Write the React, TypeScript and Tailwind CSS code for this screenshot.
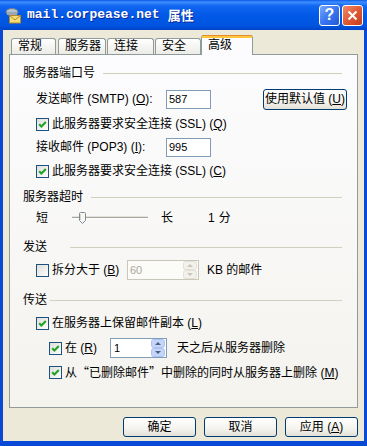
import React from "react";

function Check({ checked = true }: { checked?: boolean }) {
  return (
    <svg width="13" height="13" viewBox="0 0 13 13" className="shrink-0 block">
      <defs>
        <linearGradient id="cbg" x1="0" y1="0" x2="1" y2="1">
          <stop offset="0" stopColor="#DCDCD7" />
          <stop offset="1" stopColor="#FFFFFF" />
        </linearGradient>
      </defs>
      <rect x="0.5" y="0.5" width="12" height="12" fill="url(#cbg)" stroke="#1C5180" />
      {checked && (
        <path d="M3.2 6.2 L5.4 8.5 L9.8 4" fill="none" stroke="#21A121" strokeWidth="2" />
      )}
    </svg>
  );
}

function SpinArrows({ disabled = false }: { disabled?: boolean }) {
  const fill = disabled ? "#F2F1EB" : "#C5D5FA";
  const stroke = disabled ? "#E2E0D6" : "#AFC3F2";
  const arrow = disabled ? "#C9C7BA" : "#4D6185";
  return (
    <svg width="14" height="18" viewBox="0 0 14 18" className="block shrink-0">
      <rect x="0.5" y="0.5" width="13" height="8" rx="2" fill={fill} stroke={stroke} />
      <rect x="0.5" y="9.5" width="13" height="8" rx="2" fill={fill} stroke={stroke} />
      <path d="M4 6 L7 3 L10 6 Z" fill={arrow} />
      <path d="M4 12 L7 15 L10 12 Z" fill={arrow} />
    </svg>
  );
}

function Section({ label, lineClass, topClass }: { label: string; lineClass: string; topClass: string }) {
  return (
    <div className={"flex items-center h-[16px] pl-[13px] pr-[15px] shrink-0 " + topClass}>
      <span className="leading-[16px] whitespace-nowrap">{label}</span>
      <div className={"flex-1 h-px bg-[#D0D0BF] " + lineClass} />
    </div>
  );
}

function XpButton({ children, className }: { children: React.ReactNode; className: string }) {
  return (
    <div
      className={
        "flex items-center justify-center rounded-[3px] border border-[#003C74] bg-[linear-gradient(to_bottom,#FFFFFF_0%,#F4F3EE_60%,#E3E1D6_100%)] leading-[14px] whitespace-nowrap " +
        className
      }
    >
      {children}
    </div>
  );
}

function Tab({ children, className }: { children: React.ReactNode; className: string }) {
  return (
    <div
      className={
        "h-[16px] border border-b-0 border-[#919B9C] rounded-t-[3px] bg-[linear-gradient(to_bottom,#FFFFFF,#ECEBE6)] pl-[6px] leading-[15px] whitespace-nowrap " +
        className
      }
    >
      {children}
    </div>
  );
}

function MailIcon() {
  return (
    <svg width="17" height="17" viewBox="0 0 17 17" className="block shrink-0">
      <ellipse cx="7" cy="5" rx="6" ry="3.5" fill="#B8C2CC" stroke="#6E7C8A" />
      <rect x="2" y="5" width="10" height="3" fill="#9AA7B4" />
      <rect x="4.5" y="8.5" width="11" height="7.5" fill="#F7DC74" stroke="#B08A2A" />
      <path d="M4.5 8.5 L10 13 L15.5 8.5" fill="none" stroke="#B08A2A" />
    </svg>
  );
}

export default function App() {
  return (
    <div className="w-[367px] h-[446px] flex flex-col font-['Liberation_Sans','Noto_Sans_CJK_SC',sans-serif] text-[12px] text-black select-none overflow-hidden">
      {/* Title bar */}
      <div className="h-[30px] shrink-0 flex items-center pl-[5px] pr-[4px] bg-[linear-gradient(to_bottom,#0A5BE6_0%,#3D8EFF_7%,#1166F0_20%,#0058E6_55%,#0054E0_85%,#0044C9_100%)]">
        <MailIcon />
        <div className="ml-[5px] flex items-center text-white font-bold text-[13px] [text-shadow:1px_1px_0_#0A2A9C]">
          <span className="font-['Liberation_Mono',monospace]">mail.corpease.net</span>
          <span className="ml-[8px] font-['Noto_Sans_CJK_SC',sans-serif]">属性</span>
        </div>
        <div className="ml-auto flex gap-[2px]">
          <div className="w-[21px] h-[21px] rounded-[3px] border border-white bg-[linear-gradient(135deg,#7AAAFB_0%,#3A76EE_50%,#2258DC_100%)] flex items-center justify-center text-white font-bold text-[16px] leading-none font-['Liberation_Sans',sans-serif]">
            ?
          </div>
          <div className="w-[21px] h-[21px] rounded-[3px] border border-white bg-[linear-gradient(135deg,#F08A6C_0%,#E05A36_50%,#C23C1A_100%)] flex items-center justify-center">
            <svg width="11" height="11" viewBox="0 0 11 11" className="block">
              <path d="M1.5 1.5 L9.5 9.5 M9.5 1.5 L1.5 9.5" stroke="#FFFFFF" strokeWidth="2" />
            </svg>
          </div>
        </div>
      </div>

      {/* Body */}
      <div className="flex-1 flex flex-col bg-[#ECE9D8] border-x-[3px] border-b-[5px] border-[#0A48D6] px-[6px] pt-[5px]">
        {/* Tabs */}
        <div className="h-[19px] shrink-0 flex items-end pl-[2px] relative z-10">
          <Tab className="w-[45px]">常规</Tab>
          <Tab className="w-[48px] ml-[2px]">服务器</Tab>
          <Tab className="w-[47px] ml-[1px]">连接</Tab>
          <Tab className="w-[46px] ml-[1px]">安全</Tab>
          <div className="w-[52px] h-[20px] -mb-px border-x border-[#919B9C] rounded-t-[3px] bg-[#FCFCFE] flex flex-col">
            <div className="h-[1px] bg-[#E68B2C] rounded-t-[2px]" />
            <div className="h-[2px] bg-[#FFC73C]" />
            <div className="pl-[6px] leading-[14px] pt-[0px]">高级</div>
          </div>
        </div>

        {/* Panel */}
        <div className="h-[354px] shrink-0 border border-[#919B9C] bg-[linear-gradient(to_bottom,#FCFCFE,#F4F3EE)] flex flex-col">
          <Section label="服务器端口号" lineClass="ml-[8px]" topClass="mt-[10px]" />

          <div className="mt-[7px] h-[22px] flex items-center pl-[26px] shrink-0">
            <span className="w-[130px] whitespace-nowrap">
              发送邮件 (SMTP) (<u>O</u>):
            </span>
            <div className="w-[45px] h-[19px] border border-[#7F9DB9] bg-white pl-[2px] flex items-center text-[11px]">
              587
            </div>
            <XpButton className="ml-[52px] w-[84px] h-[21px]">
              <span>
                使用默认值 (<u>U</u>)
              </span>
            </XpButton>
          </div>

          <div className="mt-[5px] h-[18px] flex items-center pl-[26px] gap-[3px] shrink-0">
            <Check />
            <span className="whitespace-nowrap">
              此服务器要求安全连接 (SSL) (<u>Q</u>)
            </span>
          </div>

          <div className="mt-[3px] h-[22px] flex items-center pl-[26px] shrink-0">
            <span className="w-[130px] whitespace-nowrap">
              接收邮件 (POP3) (<u>I</u>):
            </span>
            <div className="w-[45px] h-[19px] border border-[#7F9DB9] bg-white pl-[2px] flex items-center text-[11px]">
              995
            </div>
          </div>

          <div className="mt-[4px] h-[18px] flex items-center pl-[26px] gap-[3px] shrink-0">
            <Check />
            <span className="whitespace-nowrap">
              此服务器要求安全连接 (SSL) (<u>C</u>)
            </span>
          </div>

          <Section label="服务器超时" lineClass="ml-[8px]" topClass="mt-[9px]" />

          <div className="mt-[3px] h-[20px] flex items-center pl-[26px] shrink-0">
            <span>短</span>
            <svg width="80" height="20" viewBox="0 0 80 20" className="block ml-[22px] shrink-0">
              <line x1="2" y1="9.5" x2="78" y2="9.5" stroke="#A4A39E" />
              <line x1="2" y1="10.5" x2="78" y2="10.5" stroke="#FFFFFF" />
              <line x1="2" y1="8.5" x2="78" y2="8.5" stroke="#E4E3DC" />
              <path
                d="M9.5 5.5 Q9.5 4.5 10.5 4.5 L14.5 4.5 Q15.5 4.5 15.5 5.5 L15.5 12.5 L12.5 15.5 L9.5 12.5 Z"
                fill="#F7F7F4"
                stroke="#7E8C9A"
              />
              <line x1="10.5" y1="6" x2="10.5" y2="12" stroke="#D8D6CC" />
            </svg>
            <span className="ml-[11px]">长</span>
            <span className="ml-[35px]">1</span>
            <span className="ml-[4px]">分</span>
          </div>

          <Section label="发送" lineClass="ml-[23px]" topClass="mt-[11px]" />

          <div className="mt-[4px] h-[22px] flex items-center pl-[26px] shrink-0">
            <Check checked={false} />
            <span className="ml-[3px] w-[72px] whitespace-nowrap">
              拆分大于 (<u>B</u>)
            </span>
            <div className="ml-[3px] w-[72px] h-[20px] border border-[#C9C7BA] bg-[#FBFBF8] flex items-center pl-[2px] pr-[1px] text-[11px] text-[#ACA899]">
              <span className="flex-1">60</span>
              <SpinArrows disabled />
            </div>
            <span className="ml-[8px] whitespace-nowrap">KB 的邮件</span>
          </div>

          <Section label="传送" lineClass="ml-[3px]" topClass="mt-[11px]" />

          <div className="mt-[6px] h-[18px] flex items-center pl-[26px] gap-[3px] shrink-0">
            <Check />
            <span className="whitespace-nowrap">
              在服务器上保留邮件副本 (<u>L</u>)
            </span>
          </div>

          <div className="mt-[5px] h-[22px] flex items-center pl-[39px] shrink-0">
            <Check />
            <span className="ml-[3px] w-[45px] whitespace-nowrap">
              在 (<u>R</u>)
            </span>
            <div className="w-[57px] h-[20px] border border-[#7F9DB9] bg-white flex items-center pl-[3px] pr-[1px] text-[11px]">
              <span className="flex-1">1</span>
              <SpinArrows />
            </div>
            <span className="ml-[10px] whitespace-nowrap">天之后从服务器删除</span>
          </div>

          <div className="mt-[4px] h-[18px] flex items-center pl-[39px] gap-[3px] shrink-0">
            <Check />
            <span className="whitespace-nowrap">
              从<span className="font-['Noto_Sans_CJK_SC',sans-serif]">“</span>已删除邮件
              <span className="font-['Noto_Sans_CJK_SC',sans-serif]">”</span>中删除的同时从服务器上删除 (<u>M</u>)
            </span>
          </div>
        </div>

        {/* Buttons */}
        <div className="mt-[9px] h-[20px] flex justify-end gap-[8px] shrink-0">
          <XpButton className="w-[73px] h-[20px]">确定</XpButton>
          <XpButton className="w-[73px] h-[20px]">取消</XpButton>
          <XpButton className="w-[73px] h-[20px]">
            <span>
              应用 (<u>A</u>)
            </span>
          </XpButton>
        </div>
      </div>
    </div>
  );
}
